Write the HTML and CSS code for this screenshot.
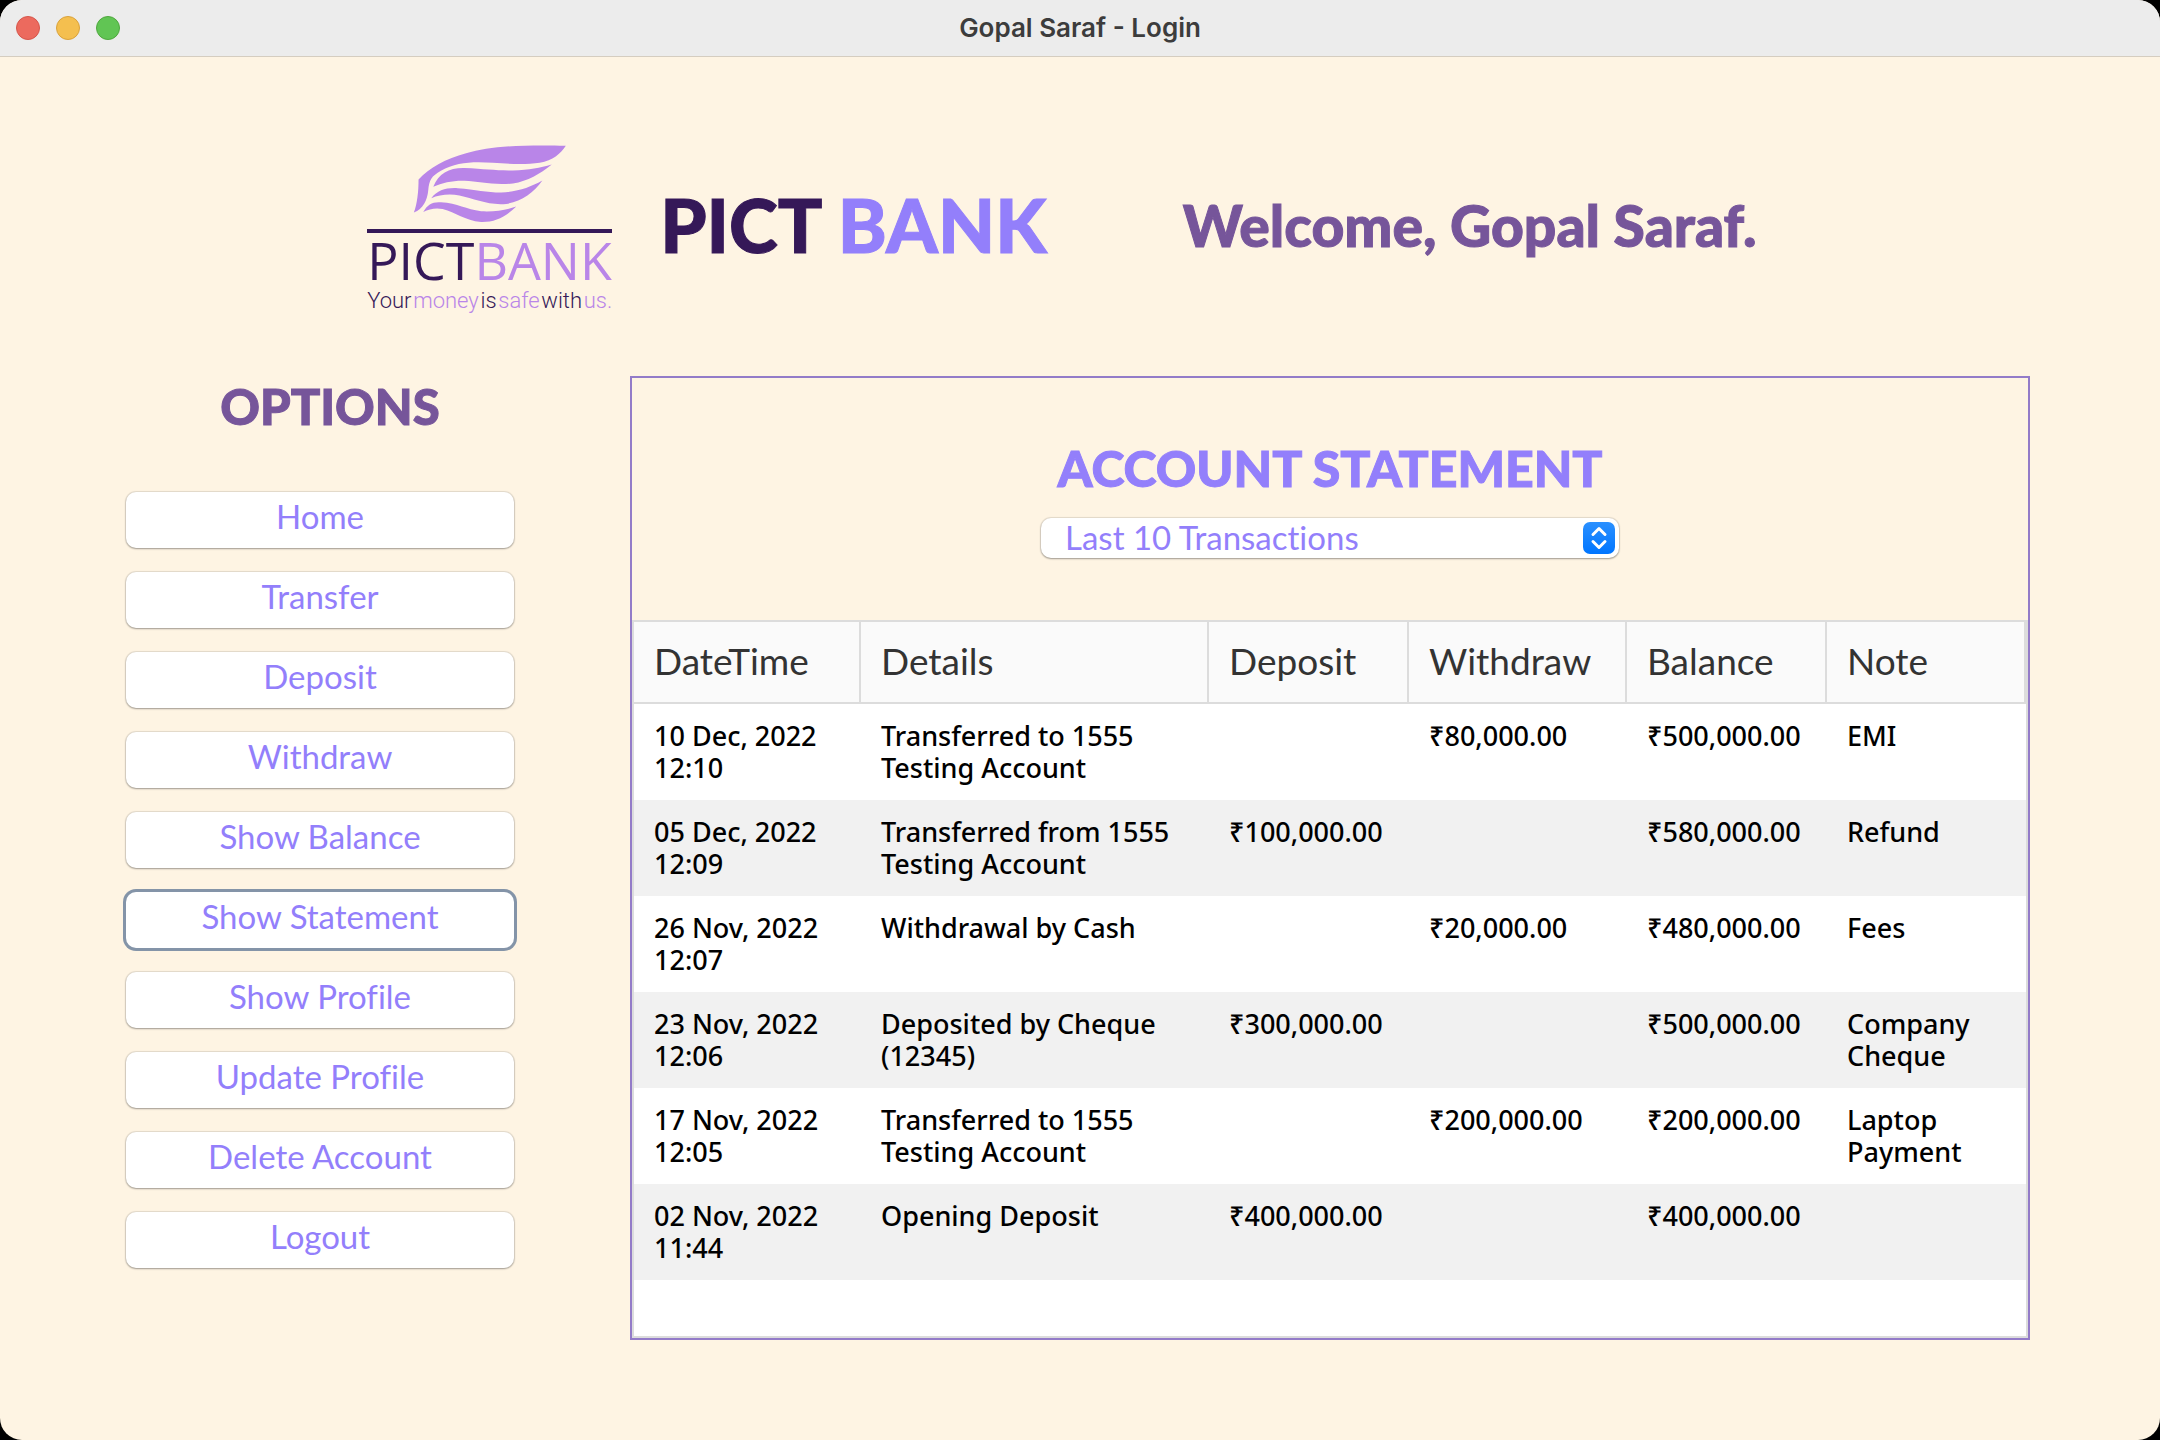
FILE: index.html
```html
<!DOCTYPE html>
<html lang="en">
<head>
<meta charset="utf-8">
<meta name="viewport" content="width=device-width, initial-scale=1">
<title>Gopal Saraf - Login</title>
<link rel="stylesheet" href="styles.css">
</head>
<body>
<div class="window">
  <div class="titlebar">
    <div class="lights">
      <span class="light light-close"></span>
      <span class="light light-min"></span>
      <span class="light light-max"></span>
    </div>
    <span class="window-title">Gopal Saraf - Login</span>
  </div>

  <header class="header">
    <div class="logo">
      <svg class="wing" viewBox="54 42 732 255" aria-hidden="true">
        <g fill="#b985e8">
          <path d="M648 47C500 44 420 50 350 70C290 86 240 114 208 148C208 185 204 220 194 247C222 235 234 210 237 180C240 150 246 138 275 122C320 96 370 94 430 98C480 102 530 104 570 98C610 90 632 72 648 47Z"/>
          <path d="M252 170C268 130 300 113 345 114C410 117 440 122 490 121C540 119 570 113 606 103C570 132 535 152 490 160C430 166 390 154 345 152C310 151 280 158 252 170Z"/>
          <path d="M246 204C265 180 290 172 325 174C380 178 410 187 455 187C505 184 540 172 578 151C552 188 515 214 470 221C415 226 375 205 330 196C300 190 270 194 246 204Z"/>
          <path d="M222 245C235 222 250 214 275 216C325 219 350 237 395 243C435 245 465 240 500 229C465 262 435 276 395 275C345 270 320 246 280 236C258 232 240 236 222 245Z"/>
        </g>
      </svg>
      <div class="logo-name"><span class="dark">PICT</span><span class="light-purple">BANK</span></div>
      <div class="logo-tag"><span class="dark">Your</span><span class="light-purple">money</span><span class="dark">is</span><span class="light-purple">safe</span><span class="dark">with</span><span class="light-purple">us.</span></div>
    </div>
    <h1 class="brand"><span class="dark">PICT</span> BANK</h1>
    <p class="welcome">Welcome, Gopal Saraf.</p>
  </header>

  <div class="content">
    <nav class="options" aria-labelledby="options-title">
      <h2 class="options-title" id="options-title">OPTIONS</h2>
      <button class="option" type="button">Home</button>
      <button class="option" type="button">Transfer</button>
      <button class="option" type="button">Deposit</button>
      <button class="option" type="button">Withdraw</button>
      <button class="option" type="button">Show Balance</button>
      <button class="option option-active" type="button">Show Statement</button>
      <button class="option" type="button">Show Profile</button>
      <button class="option" type="button">Update Profile</button>
      <button class="option" type="button">Delete Account</button>
      <button class="option" type="button">Logout</button>
    </nav>

    <main class="panel">
      <h2 class="panel-title" id="statement-title">ACCOUNT STATEMENT</h2>
      <div class="picker">
        <select class="picker-select" aria-labelledby="statement-title">
          <option>Last 10 Transactions</option>
        </select>
        <svg class="picker-icon" viewBox="0 0 32 32" aria-hidden="true">
          <defs><linearGradient id="blue" x1="0" y1="0" x2="0" y2="1"><stop offset="0" stop-color="#2a90ff"/><stop offset="1" stop-color="#0075ff"/></linearGradient></defs>
          <rect width="32" height="32" rx="7" fill="url(#blue)"/>
          <path d="M10 12.500L16 6.500L22 12.500M10 19.500L16 25.500L22 19.500" fill="none" stroke="#fff" stroke-width="3" stroke-linecap="round" stroke-linejoin="round"/>
        </svg>
      </div>
      <div class="table-box">
        <table class="statement">
          <colgroup>
            <col class="col-date"><col class="col-details"><col class="col-deposit"><col class="col-withdraw"><col class="col-balance"><col class="col-note">
          </colgroup>
          <thead>
            <tr><th>DateTime</th><th>Details</th><th>Deposit</th><th>Withdraw</th><th>Balance</th><th>Note</th></tr>
          </thead>
          <tbody>
            <tr><td>10 Dec, 2022<br>12:10</td><td>Transferred to 1555<br>Testing Account</td><td></td><td>₹80,000.00</td><td>₹500,000.00</td><td>EMI</td></tr>
            <tr><td>05 Dec, 2022<br>12:09</td><td>Transferred from 1555<br>Testing Account</td><td>₹100,000.00</td><td></td><td>₹580,000.00</td><td>Refund</td></tr>
            <tr><td>26 Nov, 2022<br>12:07</td><td>Withdrawal by Cash</td><td></td><td>₹20,000.00</td><td>₹480,000.00</td><td>Fees</td></tr>
            <tr><td>23 Nov, 2022<br>12:06</td><td>Deposited by Cheque<br>(12345)</td><td>₹300,000.00</td><td></td><td>₹500,000.00</td><td>Company<br>Cheque</td></tr>
            <tr><td>17 Nov, 2022<br>12:05</td><td>Transferred to 1555<br>Testing Account</td><td></td><td>₹200,000.00</td><td>₹200,000.00</td><td>Laptop<br>Payment</td></tr>
            <tr><td>02 Nov, 2022<br>11:44</td><td>Opening Deposit</td><td>₹400,000.00</td><td></td><td>₹400,000.00</td><td></td></tr>
          </tbody>
        </table>
      </div>
    </main>
  </div>
</div>
</body>
</html>
```

FILE: styles.css
```css
* { box-sizing: border-box; }

body {
  margin: 0;
  background: #000;
  font-family: Lato, "Noto Sans", sans-serif;
  font-variant-ligatures: none;
}

h1, h2, p { margin: 0; }

.window {
  min-height: 100vh;
  background: #fef4e3;
  border-radius: 22px;
  overflow: hidden;
}

.titlebar {
  display: grid;
  grid-template-columns: 1fr auto 1fr;
  align-items: center;
  height: 57px;
  padding: 0 16px;
  background: #ececec;
  border-bottom: 1px solid #d5cdc0;
}

.lights { display: flex; gap: 16px; }

.light {
  width: 24px;
  height: 24px;
  border: 1px solid;
  border-radius: 50%;
}

.light-close { background: #ec6a5e; border-color: #d5564b; }
.light-min { background: #f4bf4f; border-color: #d9a23c; }
.light-max { background: #61c554; border-color: #4fa73e; }

.window-title {
  font: 600 26px/32px Inter, sans-serif;
  color: #3c3c3c;
}

.header {
  display: flex;
  align-items: center;
  height: 319px;
  padding: 16px 17% 0;
  white-space: nowrap;
}

.dark { color: #351858; }
.light-purple { color: #b985e8; }

.logo {
  width: 245px;
  margin-right: 48px;
  padding-top: 10px;
}

.wing {
  display: block;
  width: 100%;
}

.logo-name {
  border-top: 4px solid #351858;
  font: 400 52px/54px "Open Sans", sans-serif;
}

.logo-tag {
  display: flex;
  justify-content: space-between;
  font: 300 22px/28px Roboto, sans-serif;
}

.brand,
.welcome,
.options-title,
.panel-title {
  font-weight: 900;
  -webkit-text-stroke: 1px currentColor;
}

.brand {
  margin-right: 136px;
  font-size: 74px;
  color: #937ffb;
}

.welcome {
  font-size: 57px;
  color: #76559a;
}

.content {
  display: grid;
  grid-template-columns: 388px 1fr;
  gap: 116px;
  padding: 0 130px 100px 126px;
}

.options {
  display: flex;
  flex-direction: column;
  gap: 24px;
}

.options-title {
  padding: 0 0 32px 20px;
  font-size: 49px;
  line-height: 60px;
  text-align: center;
  color: #76559a;
}

.option {
  height: 56px;
  padding: 0 0 8px;
  border: 0;
  border-radius: 10px;
  background: #fff;
  box-shadow: 0 0 1px 1px rgba(0, 0, 0, .1), 0 1px 2px rgba(0, 0, 0, .3);
  font: 400 33px/40px Lato, sans-serif;
  font-variant-ligatures: none;
  color: #937ffb;
}

.option-active { box-shadow: 0 0 0 3px #8494a8; }

.panel {
  display: flex;
  flex-direction: column;
  align-items: center;
  min-height: 964px;
  border: 2px solid #937bc8;
}

.panel-title {
  margin-top: 60px;
  font-size: 50px;
  line-height: 60px;
  color: #937ffb;
}

.picker {
  position: relative;
  width: 578px;
  margin: 20px 0 62px;
}

.picker-select {
  display: block;
  width: 100%;
  height: 40px;
  padding: 0 48px 3px 24px;
  border: 0;
  border-radius: 10px;
  appearance: none;
  background: #fff;
  box-shadow: 0 0 1px 1px rgba(0, 0, 0, .1), 0 1px 2px rgba(0, 0, 0, .3);
  font: 400 33px/36px Lato, sans-serif;
  font-variant-ligatures: none;
  color: #937ffb;
}

.picker-icon {
  position: absolute;
  top: 4px;
  right: 4px;
  width: 32px;
  height: 32px;
  pointer-events: none;
}

.table-box {
  flex: 1;
  align-self: stretch;
  border: 2px solid #dcdcdc;
  background: #fff;
}

.statement {
  width: 100%;
  table-layout: fixed;
  border-collapse: separate;
  border-spacing: 0;
  text-align: left;
}

.col-date { width: 227px; }
.col-details { width: 348px; }
.col-deposit { width: 200px; }
.col-withdraw { width: 218px; }
.col-balance { width: 200px; }
.col-note { width: 199px; }

.statement th {
  height: 82px;
  padding: 0 20px 4px;
  border-right: 2px solid #dcdcdc;
  border-bottom: 2px solid #dcdcdc;
  background: #fafafa;
  font-size: 37px;
  font-weight: 400;
  color: #333;
}

.statement td {
  height: 96px;
  padding: 16px 0 16px 20px;
  vertical-align: top;
  font: 500 27px/32px "Noto Sans", sans-serif;
  color: #000;
}

.statement tbody tr:nth-child(even) { background: #f1f1f1; }
```
